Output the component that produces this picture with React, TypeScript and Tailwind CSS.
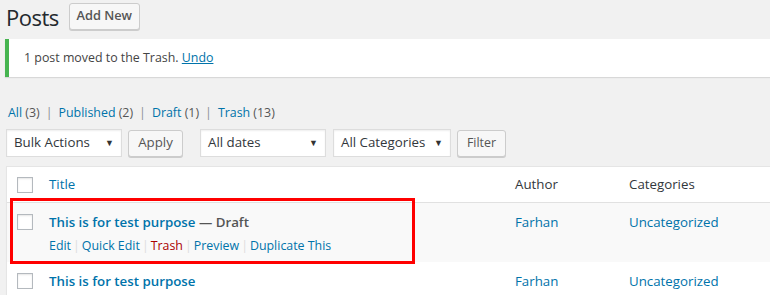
import React from 'react';

const font = { fontFamily: '"Open Sans", "Noto Sans", sans-serif' };

function Checkbox() {
  return (
    <span className="block h-4 w-4 shrink-0 border border-[#b4b9be] bg-white shadow-[inset_0_1px_2px_rgba(0,0,0,0.1)]" />
  );
}

function Select({ label, width }: { label: string; width: string }) {
  return (
    <div
      className={`flex h-[28px] items-center justify-between border border-[#ddd] bg-white pl-[7px] pr-[7px] text-[13.3px] text-[#32373c] shadow-[inset_0_1px_2px_rgba(0,0,0,0.07)] ${width}`}
    >
      <span>{label}</span>
      <span className="text-[9px] text-[#333]">▼</span>
    </div>
  );
}

function Button({ label, className }: { label: string; className?: string }) {
  return (
    <div
      className={`flex h-[27px] items-center justify-center rounded-[3px] border border-[#ccc] bg-[#f7f7f7] text-[#555] shadow-[0_1px_0_#ccc] ${className ?? ''}`}
    >
      {label}
    </div>
  );
}

const Sep = () => <span className="px-[2px] text-[#ddd]">|</span>;

export default function App() {
  return (
    <div className="relative h-[295px] w-[770px] overflow-hidden bg-[#f1f1f1] text-[12.4px] text-[#444]" style={font}>
      {/* Heading */}
      <div className="mt-[3px] flex h-[26px] items-center gap-[10px] pl-[6px]">
        <h1 className="pt-[2px] text-[22px] leading-none tracking-[-0.5px] text-[#23282d]">Posts</h1>
        <Button label="Add New" className="h-[26px] w-[71px] text-[12.8px] font-semibold text-[#0073aa]" />
      </div>

      {/* Notice */}
      <div className="ml-[5px] mt-[10px] flex h-[38px] items-center border-l-4 border-[#46b450] bg-white pl-[15px] text-[#444] shadow-[0_1px_1px_rgba(0,0,0,0.1)]">
        1 post moved to the Trash.&nbsp;<span className="text-[#0073aa] underline">Undo</span>
      </div>

      {/* Status links */}
      <div className="mt-[27px] flex items-center pl-[8px] leading-[18px] text-[#555]">
        <span className="text-[#0073aa]">All</span>&nbsp;(3)
        <span className="px-[6px] text-[#8c8f94]">|</span>
        <span className="text-[#0073aa]">Published</span>&nbsp;(2)
        <span className="px-[6px] text-[#8c8f94]">|</span>
        <span className="text-[#0073aa]">Draft</span>&nbsp;(1)
        <span className="px-[6px] text-[#8c8f94]">|</span>
        <span className="text-[#0073aa]">Trash</span>&nbsp;(13)
      </div>

      {/* Filters */}
      <div className="mt-[7px] flex items-center pl-[6px]">
        <Select label="Bulk Actions" width="w-[116px]" />
        <Button label="Apply" className="ml-[6px] w-[55px] text-[13.3px]" />
        <Select label="All dates" width="ml-[17px] w-[126px]" />
        <Select label="All Categories" width="ml-[7px] w-[118px]" />
        <Button label="Filter" className="ml-[6px] w-[49px] text-[12.4px]" />
      </div>

      {/* Table */}
      <div className="ml-[6px] mt-[9px] w-[800px] border border-[#e5e5e5] bg-white shadow-[0_1px_1px_rgba(0,0,0,0.04)]">
        <div className="flex h-[36px] items-center border-b border-[#e1e1e1] text-[13.3px]">
          <div className="w-[42px] shrink-0 pl-[10px]">
            <Checkbox />
          </div>
          <div className="w-[466px] text-[#0073aa]">Title</div>
          <div className="w-[114px] text-[#32373c]">Author</div>
          <div className="text-[#32373c]">Categories</div>
        </div>

        <div className="flex h-[59px] items-start bg-[#f9f9f9] pt-[10px]">
          <div className="w-[42px] shrink-0 pl-[10px] pt-[1px]">
            <Checkbox />
          </div>
          <div className="w-[466px]">
            <div className="text-[13.3px] font-semibold leading-[18px]">
              <span className="text-[#0073aa]">This is for test purpose</span>
              <span className="text-[#555]"> — Draft</span>
            </div>
            <div className="mt-[6px] flex items-center text-[#0073aa]">
              Edit<Sep />Quick Edit<Sep />
              <span className="text-[#a00]">Trash</span>
              <Sep />Preview<Sep />Duplicate This
            </div>
          </div>
          <div className="w-[114px] text-[13.3px] leading-[18px] text-[#0073aa]">Farhan</div>
          <div className="text-[13.3px] leading-[18px] text-[#0073aa]">Uncategorized</div>
        </div>

        <div className="flex h-[40px] items-start pt-[10px]">
          <div className="w-[42px] shrink-0 pl-[10px] pt-[1px]">
            <Checkbox />
          </div>
          <div className="w-[466px] text-[13.3px] font-semibold leading-[18px] text-[#0073aa]">
            This is for test purpose
          </div>
          <div className="w-[114px] text-[13.3px] leading-[18px] text-[#0073aa]">Farhan</div>
          <div className="text-[13.3px] leading-[18px] text-[#0073aa]">Uncategorized</div>
        </div>
      </div>

      {/* Annotation box */}
      <div className="pointer-events-none absolute left-[10px] top-[198px] h-[66px] w-[405px] border-[3px] border-[#ff0000]" />
    </div>
  );
}
